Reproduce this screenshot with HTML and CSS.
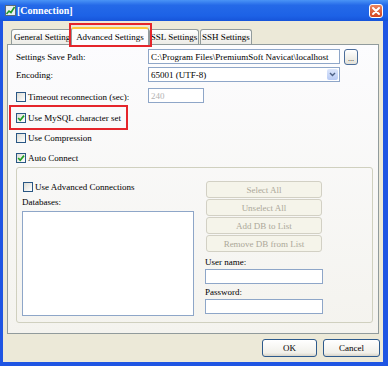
FILE: index.html
```html
<!DOCTYPE html>
<html lang="en">
<head>
    <meta charset="UTF-8">
    <title>[Connection]</title>
    <link rel="stylesheet" href="styles.css">
</head>
<body>
    <div class="window">
        <div class="titlebar">
            <svg class="app-icon" width="11" height="11" viewBox="0 0 11 11">
                <rect x="0.5" y="0.5" width="10" height="10" fill="#e9eef2" stroke="#5a6a7a"/>
                <polyline points="1.5,9 4,6 6,7.5 9.5,2" fill="none" stroke="#1f9a2a" stroke-width="1.6"/>
            </svg>
            <span class="title">[Connection]</span>
            <span class="close">
                <svg width="12" height="12" viewBox="0 0 12 12">
                    <path d="M3 3 L9 9 M9 3 L3 9" stroke="#fff" stroke-width="2" stroke-linecap="round"/>
                </svg>
            </span>
        </div>

        <div class="frame">
            <div class="tabs">
                <span class="tab general">General Settings</span>
                <span class="tab active">Advanced Settings</span>
                <span class="tab ssl">SSL Settings</span>
                <span class="tab ssh">SSH Settings</span>
            </div>

            <div class="panel">
                <div class="row r1">
                    <span class="lbl">Settings Save Path:</span>
                    <span class="text path">C:\Program Files\PremiumSoft Navicat\localhost</span>
                    <span class="browse">...</span>
                </div>
                <div class="row r2">
                    <span class="lbl">Encoding:</span>
                    <span class="text select">
                        65001 (UTF-8)
                        <span class="arrow">
                            <svg width="7" height="5" viewBox="0 0 7 5">
                                <path d="M1 1 L3.5 3.5 L6 1" fill="none" stroke="#4d6185" stroke-width="1.4"/>
                            </svg>
                        </span>
                    </span>
                </div>
                <div class="row r3">
                    <span class="lbl"><span class="cb"></span>Timeout reconnection (sec):</span>
                    <span class="text short">240</span>
                </div>

                <div class="check-row mark"><span class="cb checked"></span>Use MySQL character set</div>
                <div class="check-row"><span class="cb"></span>Use Compression</div>
                <div class="check-row last"><span class="cb checked"></span>Auto Connect</div>

                <div class="group">
                    <div class="col-left">
                        <div class="check-row small"><span class="cb"></span>Use Advanced Connections</div>
                        <div class="lbl-sm">Databases:</div>
                        <div class="listbox"></div>
                    </div>
                    <div class="col-right">
                        <span class="dbtn first">Select All</span>
                        <span class="dbtn">Unselect All</span>
                        <span class="dbtn">Add DB to List</span>
                        <span class="dbtn">Remove DB from List</span>
                        <div class="lbl-sm user">User name:</div>
                        <div class="text wide"></div>
                        <div class="lbl-sm">Password:</div>
                        <div class="text wide"></div>
                    </div>
                </div>
            </div>

            <div class="footer">
                <span class="btn ok">OK</span>
                <span class="btn cancel">Cancel</span>
            </div>
        </div>
    </div>
</body>
</html>
```

FILE: styles.css
```css
body {
    margin: 0;
    font-family: "Liberation Serif", "Times New Roman", serif;
    font-size: 9px;
    color: #000;
}
.window {
    width: 388px;
    height: 366px;
    display: flex;
    flex-direction: column;
    background: #ece9d8;
}
.titlebar {
    height: 21px;
    flex: none;
    display: flex;
    align-items: center;
    padding-left: 5px;
    background: linear-gradient(#4a94f6 0%, #2469e8 25%, #1d62e6 75%, #1654d9 100%);
}
.app-icon {
    flex: none;
}
.title {
    margin-left: 1px;
    color: #fff;
    font-weight: bold;
    font-size: 10px;
}
.close {
    margin-left: auto;
    margin-right: 5px;
    width: 14px;
    height: 14px;
    box-sizing: border-box;
    border: 1px solid #fff;
    border-radius: 3px;
    background: linear-gradient(#ea8660, #d3441f);
    display: flex;
    align-items: center;
    justify-content: center;
}
.frame {
    flex: 1;
    display: flex;
    flex-direction: column;
    border: solid #1f55e3;
    border-width: 0 5px 4px 3px;
}
.tabs {
    height: 23px;
    display: flex;
    align-items: flex-end;
    padding-left: 8px;
}
.tab {
    height: 15px;
    box-sizing: border-box;
    border: 1px solid #919b9c;
    border-bottom: none;
    border-radius: 3px 3px 0 0;
    background: linear-gradient(#ffffff, #ecebe6);
    display: flex;
    align-items: center;
    justify-content: center;
    white-space: nowrap;
}
.tab.general {
    width: 61px;
    justify-content: flex-start;
    padding-left: 2px;
}
.tab.active {
    width: 78px;
    height: 18px;
    margin-left: -1px;
    margin-bottom: -1px;
    position: relative;
    z-index: 1;
    background: #fcfcfe;
    border-top: 2px solid #ffc83c;
}
.tab.active::after {
    content: "";
    position: absolute;
    top: -6px;
    left: -3px;
    right: -4px;
    bottom: -2px;
    border: 2px solid #e5252b;
}
.tab.ssl {
    width: 50px;
}
.tab.ssh {
    width: 52px;
    margin-left: 1px;
}
.panel {
    margin: 0 4px;
    height: 290px;
    box-sizing: border-box;
    border: 1px solid #919b9c;
    background: linear-gradient(#fcfcfe, #f4f3ee);
    padding: 4px 5px 0 8px;
}
.row {
    display: flex;
    align-items: center;
    height: 15px;
}
.r1 {
    margin-bottom: 3px;
}
.r2 {
    margin-bottom: 6px;
}
.r3 {
    margin-bottom: 5px;
}
.lbl {
    width: 132px;
    flex: none;
    display: flex;
    align-items: center;
}
.r3 .lbl {
    margin-top: 3px;
}
.text {
    height: 15px;
    box-sizing: border-box;
    border: 1px solid #8ea6c8;
    background: #fff;
    padding-left: 2px;
    display: flex;
    align-items: center;
    white-space: nowrap;
    overflow: hidden;
}
.path,
.select {
    width: 192px;
}
.select {
    position: relative;
}
.arrow {
    position: absolute;
    right: 1px;
    top: 1px;
    width: 11px;
    height: 11px;
    border-radius: 2px;
    background: linear-gradient(#dce6fb, #b8cbf5);
    display: flex;
    align-items: center;
    justify-content: center;
}
.short {
    width: 56px;
    color: #b4b4b4;
}
.browse {
    margin-left: 4px;
    width: 14px;
    height: 16px;
    box-sizing: border-box;
    border: 1px solid #4b6d9a;
    border-radius: 3px;
    background: linear-gradient(#ffffff, #e4e2d8);
    display: flex;
    align-items: flex-end;
    justify-content: center;
    line-height: 11px;
    font-size: 8px;
}
.cb {
    width: 8px;
    height: 8px;
    flex: none;
    border: 1px solid #2a5784;
    background: linear-gradient(135deg, #dcdcd5, #ffffff);
    margin-right: 2px;
    display: inline-block;
}
.cb.checked {
    background: url("data:image/svg+xml;utf8,<svg xmlns='http://www.w3.org/2000/svg' viewBox='0 0 8 8'><path d='M1.2 4 L3.2 6.2 L7 1.6' fill='none' stroke='%2321a121' stroke-width='1.7'/></svg>") center / 8px 8px no-repeat,
        linear-gradient(135deg, #dcdcd5, #ffffff);
}
.check-row {
    height: 20px;
    display: flex;
    align-items: center;
}
.check-row.last {
    height: 19px;
}
.check-row.mark {
    width: fit-content;
    position: relative;
}
.check-row.mark::after {
    content: "";
    position: absolute;
    top: -3px;
    left: -7px;
    right: -7px;
    bottom: -2px;
    border: 2px solid #e5252b;
}
.group {
    height: 156px;
    box-sizing: border-box;
    border: 1px solid #d0d0bf;
    border-radius: 3px;
    padding: 12px 0 0 5px;
    display: flex;
    gap: 11px;
}
.col-left {
    width: 172px;
}
.check-row.small {
    height: 14px;
    padding-left: 1px;
}
.lbl-sm {
    height: 16px;
    display: flex;
    align-items: center;
}
.listbox {
    margin-top: 1px;
    height: 105px;
    box-sizing: border-box;
    border: 1px solid #8ea6c8;
    background: #fff;
}
.col-right {
    width: 118px;
    display: flex;
    flex-direction: column;
}
.dbtn {
    width: 116px;
    height: 17px;
    margin: 0 0 1px 1px;
    box-sizing: border-box;
    border: 1px solid #d2d0c4;
    border-radius: 3px;
    background: #f5f4ea;
    color: #aca899;
    display: flex;
    align-items: center;
    justify-content: center;
}
.dbtn.first {
    margin-top: 1px;
}
.col-right .lbl-sm {
    height: 15px;
}
.col-right .user {
    margin-top: 1px;
}
.text.wide {
    width: 118px;
}
.footer {
    flex: 1;
    display: flex;
    justify-content: flex-end;
    align-items: flex-start;
    gap: 6px;
    padding: 5px 3px 0 0;
}
.btn {
    height: 18px;
    box-sizing: border-box;
    border: 1px solid #2d5a8c;
    border-radius: 3px;
    background: linear-gradient(#ffffff, #f1f0ea 80%, #d8d4c8);
    display: flex;
    align-items: center;
    justify-content: center;
}
.ok {
    width: 55px;
}
.cancel {
    width: 57px;
}
```
